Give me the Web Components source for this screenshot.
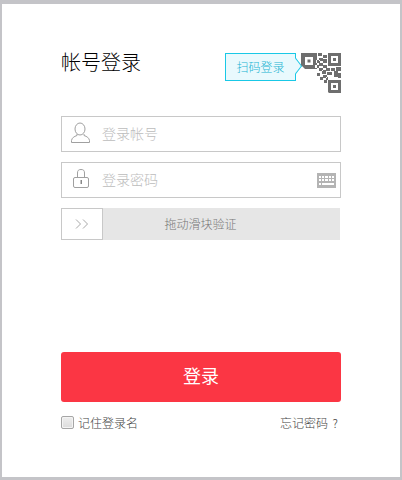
<!DOCTYPE html>
<html lang="zh">
<head>
<meta charset="utf-8">
<style>
html,body{margin:0;padding:0;height:480px;overflow:hidden;background:#c4c4c8;font-family:"Noto Sans CJK SC","Liberation Sans",sans-serif;}
</style>
</head>
<body>
<login-card>
  <login-header slot="header">帐号登录</login-header>
  <text-field icon="user" placeholder="登录帐号"></text-field>
  <text-field icon="lock" placeholder="登录密码" keyboard></text-field>
  <slide-verify>拖动滑块验证</slide-verify>
  <login-button>登录</login-button>
  <login-footer></login-footer>
</login-card>
<script>
function def(name, html){
  customElements.define(name, class extends HTMLElement{
    constructor(){super();this.attachShadow({mode:'open'}).innerHTML=typeof html==='function'?html(this):html;}
  });
}
def('login-card',`<style>
:host{display:block;box-sizing:border-box;width:398px;height:473px;margin:4px 0 0 2px;background:#fff;padding:45px 59px 0 59px;}
.body{display:flex;flex-direction:column}
</style><slot name="header"></slot><div class="body"><slot></slot></div>`);

const finder=(x,y,s,r,c)=>{
  const h=s-2*r, o=(s-c)/2;
  return `M${x} ${y}h${s}v${s}h-${s}zM${x+r} ${y+r}v${h}h${h}v-${h}zM${x+o} ${y+o}h${c}v${c}h-${c}z`;
};
const dots=[[17,0,4,3],[22,2,4,3],[18,5,4,3],[15,7,4,3],[22,6,4,4],[18,10,4,3],[14,12,4,3],[22,12,4,3],[25,15,4,3],[30,15,4,3],[35,14,5,4],[18,15,4,3],[21,17,4,4],[26,19,5,3],[33,18,4,6],[37,20,3,5],[16,20,3,3],[22,22,4,3],[19,24,3,3],[25,24,2,3],[23,27,3,3]];
const qrPath=finder(0,0,16,4,3)+finder(27,0,13,3,3)+finder(27,27,13,3,3)+dots.map(d=>`M${d[0]} ${d[1]}h${d[2]}v${d[3]}h-${d[2]}z`).join('');

def('login-header',`<style>
:host{display:flex;justify-content:space-between;align-items:flex-start;height:67px;box-sizing:border-box;}
.t{font-size:20px;font-weight:300;line-height:28px;color:#000;margin-top:-1px}
.r{display:flex;align-items:flex-start;padding-top:4px}
.tag{position:relative;box-sizing:border-box;width:71px;height:28px;border:1px solid #19c8e6;background:#e9f9fd;color:#22b4d2;font-size:12px;font-weight:300;line-height:26px;text-align:center;margin-right:5px}
.tag::after{content:"";position:absolute;right:-6px;top:7px;width:9px;height:9px;background:#e9f9fd;border:1px solid #19c8e6;border-left:0;border-bottom:0;transform:rotate(45deg) skew(8deg,8deg);}
svg{display:block}
</style><div class="t"><slot></slot></div><div class="r"><div class="tag">扫码登录</div>
<svg width="40" height="40" viewBox="0 0 40 40" style="clip-path:polygon(0 0,100% 0,100% 100%,70% 100%,0 30%)"><path fill="#6e6e6e" fill-rule="evenodd" d="${qrPath}"/></svg></div>`);

const icons={
user:`<svg width="20" height="20" viewBox="0 0 20 20" fill="none" stroke="#a0a0a0" stroke-width="1" style="overflow:visible"><ellipse cx="9" cy="5" rx="5" ry="6"/><path d="M6 10v1.500c-3 1-5 2.300-5.500 5v2h18v-2c-.5-2.700-2.500-4-5.500-5V10"/></svg>`,
lock:`<svg width="20" height="20" viewBox="0 0 20 20" fill="none" stroke="#a0a0a0" stroke-width="1" style="overflow:visible"><path d="M6.500 7.500V3c0-2.500 1-3.500 3.500-3.500s3.500 1 3.500 3.500v4.500"/><rect x="2.500" y="7.500" width="15" height="10" rx="1.500"/><rect x="9.500" y="10" width="1.500" height="4" fill="#888" stroke="none"/></svg>`
};
def('text-field',el=>`<style>
:host{display:flex;align-items:center;box-sizing:border-box;width:280px;height:36px;border:1px solid #c8c8c8;margin-bottom:10px;background:#fff;}
.i{width:40px;flex:none;display:flex;justify-content:center;margin-left:-1px}
.p{flex:1;font-size:14px;font-weight:300;color:#bcbcbc;line-height:32px;padding:0 0 2px 1px}
.k{display:block;margin-right:4px}
</style><div class="i">${icons[el.getAttribute('icon')]}</div><div class="p">${el.getAttribute('placeholder')}</div>${el.hasAttribute('keyboard')?`<svg class="k" width="19" height="15" viewBox="0 0 19 15"><rect width="19" height="15" fill="#b4b4b4"/><path fill="#fff" d="M2 3h2v2H2zM5 3h2v2H5zM8 3h3v2H8zM12 3h2v2h-2zM15 3h2v2h-2zM2 6h2v2H2zM5 6h2v2H5zM8 6h3v2H8zM12 6h2v2h-2zM15 6h2v2h-2zM2 10h2v2H2zM5 10h12v2H5z"/></svg>`:''}`);

def('slide-verify',`<style>
:host{display:block;position:relative;box-sizing:border-box;width:279px;height:32px;background:#e6e6e6;}
.h{position:absolute;left:0;top:0;box-sizing:border-box;width:42px;height:32px;background:#fff;border:1px solid #c8c8c8;display:flex;align-items:center;justify-content:center;}
.t{text-align:center;font-size:12px;font-weight:300;line-height:32px;color:#777;}
svg{display:block}
</style><div class="t"><slot></slot></div><div class="h"><svg width="14" height="10" viewBox="0 0 14 10" fill="none" stroke="#a8a8a8" stroke-width="1"><path d="M1 .5 5.500 5 1 9.500M8 .5 12.500 5 8 9.500"/></svg></div>`);

def('login-button',`<style>
:host{display:block;box-sizing:border-box;width:280px;height:50px;margin-top:112px;background:#fb3644;border-radius:3px;color:#fff;font-size:18px;line-height:47px;text-align:center;}
</style><slot></slot>`);

def('login-footer',`<style>
:host{display:flex;justify-content:space-between;align-items:center;width:279px;height:20px;margin-top:10px;font-size:12px;font-weight:300;color:#444;}
.l{display:flex;align-items:center;gap:4px}
.c{box-sizing:border-box;width:13px;height:13px;border:1px solid #a6a6a6;border-radius:2px;background:linear-gradient(#eee,#dcdcdc);box-shadow:inset 0 0 0 1px #f4f4f4}
.f{word-spacing:2px;padding-right:2px}
</style><div class="l"><span class="c"></span><span>记住登录名</span></div><span class="f">忘记密码 ?</span>`);
</script>
</body>
</html>
